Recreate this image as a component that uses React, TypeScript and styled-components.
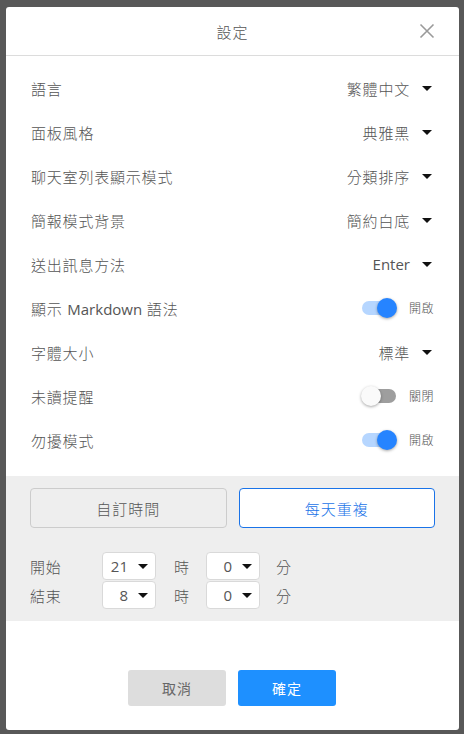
import React, { useState } from "react";
import styled, { createGlobalStyle } from "styled-components";

const Global = createGlobalStyle`
  html, body { margin: 0; padding: 0; }
  body {
    background: #585858;
    font-family: "Open Sans", "Noto Sans CJK TC", sans-serif;
    width: 464px;
    height: 734px;
    overflow: hidden;
  }
`;

const Overlay = styled.div`
  width: 464px;
  height: 734px;
  padding: 7px 5px 0 6px;
  box-sizing: border-box;
`;

const Modal = styled.div`
  width: 453px;
  height: 723px;
  background: #fff;
  border-radius: 3px;
  display: flex;
  flex-direction: column;
  overflow: hidden;
`;

const Header = styled.div`
  height: 48px;
  border-bottom: 1px solid #dcdcdc;
  display: flex;
  align-items: center;
  justify-content: center;
  position: relative;
  flex-shrink: 0;
`;

const Title = styled.div`
  font-size: 15px;
  font-weight: 300;
  color: #555;
  letter-spacing: 1px;
`;

const CloseBtn = styled.button`
  position: absolute;
  right: 24px;
  top: 16px;
  width: 16px;
  height: 16px;
  padding: 0;
  border: none;
  background: none;
  display: flex;
  align-items: center;
  justify-content: center;
`;

const List = styled.div`
  padding: 10px 25px 14px 25px;
  display: flex;
  flex-direction: column;
`;

const Row = styled.div`
  height: 44px;
  display: flex;
  align-items: center;
  justify-content: space-between;
`;

const Label = styled.div`
  font-size: 15px;
  font-weight: 300;
  color: #555;
  letter-spacing: 0.8px;
`;

const Latin = styled.span`
  letter-spacing: 0;
  font-weight: 400;
`;

const Value = styled.div`
  display: flex;
  align-items: center;
  font-size: 15px;
  font-weight: 300;
  color: #555;
  letter-spacing: 0.8px;
`;

const Caret = styled.span<{ $ml?: number; $mr?: number }>`
  display: inline-block;
  width: 0;
  height: 0;
  border-left: 5px solid transparent;
  border-right: 5px solid transparent;
  border-top: 5px solid #111;
  margin-left: ${(p) => p.$ml ?? 12}px;
  margin-right: ${(p) => p.$mr ?? 2}px;
`;

const SwitchWrap = styled.div`
  display: flex;
  align-items: center;
`;

const Track = styled.div<{ $on: boolean }>`
  position: relative;
  width: 34px;
  height: 14px;
  border-radius: 7px;
  background: ${(p) => (p.$on ? "#b6d6ff" : "#9e9e9e")};
  margin-right: 13px;
`;

const Thumb = styled.div<{ $on: boolean }>`
  position: absolute;
  top: -3px;
  left: ${(p) => (p.$on ? "15px" : "-1px")};
  width: 20px;
  height: 20px;
  border-radius: 50%;
  background: ${(p) => (p.$on ? "#2684ff" : "#fafafa")};
  box-shadow: 0 1px 3px rgba(0, 0, 0, 0.35);
`;

const SwitchText = styled.span`
  font-size: 12px;
  font-weight: 300;
  color: #555;
  letter-spacing: 0.5px;
`;

const Section = styled.div`
  background: #eeeeee;
  padding: 12px 24px 12px 24px;
  display: flex;
  flex-direction: column;
`;

const Tabs = styled.div`
  display: grid;
  grid-template-columns: 1fr 1fr;
  gap: 12px;
`;

const Tab = styled.button<{ $active?: boolean }>`
  height: 40px;
  border-radius: 4px;
  border: 1px solid ${(p) => (p.$active ? "#1a73e8" : "#cccccc")};
  background: ${(p) => (p.$active ? "#fff" : "#eeeeee")};
  color: ${(p) => (p.$active ? "#1a73e8" : "#555")};
  font-family: inherit;
  font-size: 15px;
  font-weight: 300;
  letter-spacing: 1px;
  padding: 0;
`;

const TimeGrid = styled.div`
  margin-top: 24px;
  display: flex;
  flex-direction: column;
  gap: 1px;
`;

const TimeRow = styled.div`
  display: grid;
  grid-template-columns: 72px 54px 18px 15px 17px 54px 16px auto;
  align-items: center;
  height: 28px;
`;

const TimeLabel = styled.span`
  font-size: 15px;
  font-weight: 300;
  color: #555;
  letter-spacing: 0.8px;
`;

const Unit = styled.span<{ $col: number }>`
  grid-column: ${(p) => p.$col};
  font-size: 15px;
  font-weight: 300;
  color: #555;
`;

const Select = styled.div<{ $col: number }>`
  grid-column: ${(p) => p.$col};
  height: 28px;
  box-sizing: border-box;
  background: #fff;
  border: 1px solid #d9d9d9;
  border-radius: 4px;
  display: flex;
  align-items: center;
  justify-content: flex-end;
  padding-right: 7px;
  font-size: 15px;
  color: #555;
`;

const Footer = styled.div`
  flex: 1;
  display: flex;
  align-items: flex-end;
  justify-content: center;
  gap: 12px;
  padding: 0 1px 24px 0;
`;

const FootBtn = styled.button<{ $primary?: boolean }>`
  width: 98px;
  height: 36px;
  border: none;
  border-radius: 3px;
  background: ${(p) => (p.$primary ? "#1e90ff" : "#dddddd")};
  color: ${(p) => (p.$primary ? "#fff" : "#666")};
  font-family: inherit;
  font-size: 14px;
  letter-spacing: 1px;
  padding: 0;
`;

type Item =
  | { kind: "select"; label: React.ReactNode; key: string; value: React.ReactNode }
  | { kind: "switch"; label: React.ReactNode; key: string; on: boolean };

const items: Item[] = [
  { kind: "select", key: "lang", label: "語言", value: "繁體中文" },
  { kind: "select", key: "theme", label: "面板風格", value: "典雅黑" },
  { kind: "select", key: "list", label: "聊天室列表顯示模式", value: "分類排序" },
  { kind: "select", key: "bg", label: "簡報模式背景", value: "簡約白底" },
  { kind: "select", key: "send", label: "送出訊息方法", value: <Latin>Enter</Latin> },
  {
    kind: "switch",
    key: "md",
    label: (
      <>
        顯示 <Latin>Markdown</Latin> 語法
      </>
    ),
    on: true,
  },
  { kind: "select", key: "font", label: "字體大小", value: "標準" },
  { kind: "switch", key: "unread", label: "未讀提醒", on: false },
  { kind: "switch", key: "dnd", label: "勿擾模式", on: true },
];

const TimeSelect = ({ col, value }: { col: number; value: string }) => (
  <Select $col={col}>
    {value}
    <Caret $ml={10} $mr={0} />
  </Select>
);

export default function App() {
  const [tab] = useState(1);
  return (
    <>
      <Global />
      <Overlay>
        <Modal>
          <Header>
            <Title>設定</Title>
            <CloseBtn aria-label="close">
              <svg width="16" height="16" viewBox="0 0 16 16">
                <path d="M1.5 1.5 L14.5 14.5 M14.5 1.5 L1.5 14.5" stroke="#9a9a9a" strokeWidth="1.6" fill="none" />
              </svg>
            </CloseBtn>
          </Header>
          <List>
            {items.map((it) => (
              <Row key={it.key}>
                <Label>{it.label}</Label>
                {it.kind === "select" ? (
                  <Value>
                    {it.value}
                    <Caret />
                  </Value>
                ) : (
                  <SwitchWrap>
                    <Track $on={it.on}>
                      <Thumb $on={it.on} />
                    </Track>
                    <SwitchText>{it.on ? "開啟" : "關閉"}</SwitchText>
                  </SwitchWrap>
                )}
              </Row>
            ))}
          </List>
          <Section>
            <Tabs>
              <Tab $active={tab === 0}>自訂時間</Tab>
              <Tab $active={tab === 1}>每天重複</Tab>
            </Tabs>
            <TimeGrid>
              <TimeRow>
                <TimeLabel>開始</TimeLabel>
                <TimeSelect col={2} value="21" />
                <Unit $col={4}>時</Unit>
                <TimeSelect col={6} value="0" />
                <Unit $col={8}>分</Unit>
              </TimeRow>
              <TimeRow>
                <TimeLabel>結束</TimeLabel>
                <TimeSelect col={2} value="8" />
                <Unit $col={4}>時</Unit>
                <TimeSelect col={6} value="0" />
                <Unit $col={8}>分</Unit>
              </TimeRow>
            </TimeGrid>
          </Section>
          <Footer>
            <FootBtn>取消</FootBtn>
            <FootBtn $primary>確定</FootBtn>
          </Footer>
        </Modal>
      </Overlay>
    </>
  );
}
